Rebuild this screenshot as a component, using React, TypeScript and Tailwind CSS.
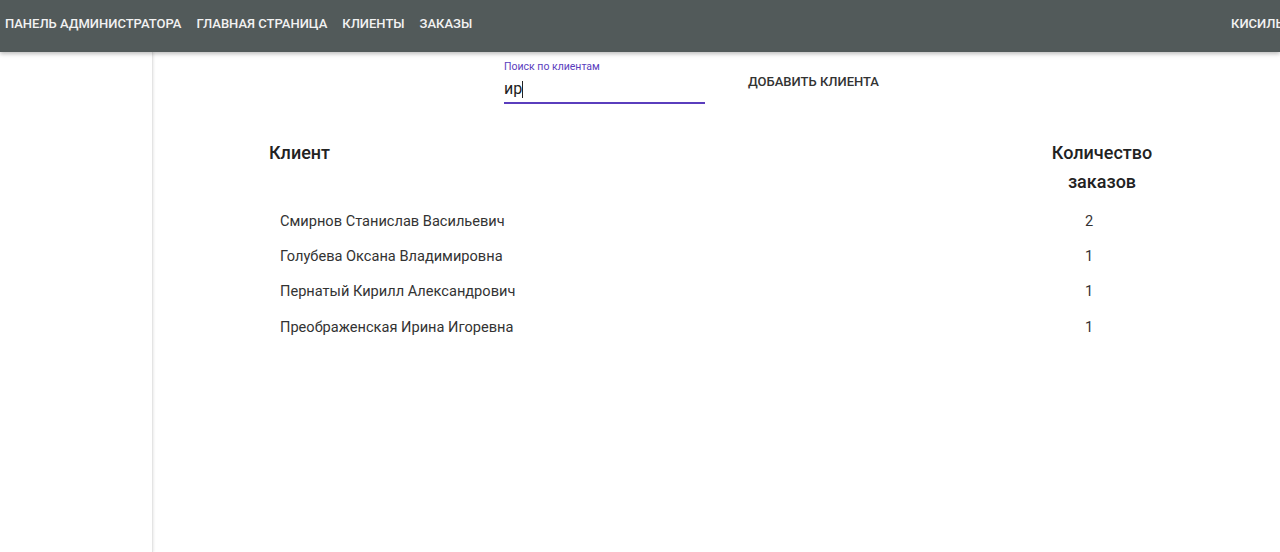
import React from "react";

const rows = [
  ["Смирнов Станислав Васильевич", "2"],
  ["Голубева Оксана Владимировна", "1"],
  ["Пернатый Кирилл Александрович", "1"],
  ["Преображенская Ирина Игоревна", "1"],
];

export default function App() {
  return (
    <div className="w-[1280px] h-[552px] overflow-hidden bg-white flex flex-col" style={{ fontFamily: "Roboto, 'Noto Sans', sans-serif" }}>
      <header className="relative z-10 h-[52px] shrink-0 bg-[#525a5a] shadow-[0_2px_4px_rgba(0,0,0,0.25)] flex items-center pb-[4px] text-[#f2f2f2] text-[13px] font-medium uppercase whitespace-nowrap">
        <div className="flex items-center gap-[15px] pl-[5px]">
          <span>Панель администратора</span>
          <span>Главная страница</span>
          <span>Клиенты</span>
          <span>Заказы</span>
        </div>
        <div className="ml-auto pl-[16px] w-[65px] overflow-hidden"><span>Кисильников</span></div>
      </header>
      <div className="flex flex-1">
        <aside className="w-[153px] shrink-0 border-r border-[#e4e4e4] shadow-[1px_0_2px_rgba(0,0,0,0.08)]" />
        <main className="flex-1">
          <div className="flex items-start mt-[8px] ml-[351px]">
            <div className="w-[201px] flex flex-col">
              <label className="text-[10.5px] leading-[12px] text-[#5a3dbd] mt-[1px]">Поиск по клиентам</label>
              <div className="mt-[6px] text-[16px] leading-[20px] text-[#222] flex items-center">
                ир<span className="inline-block w-px h-[17px] bg-[#222]" />
              </div>
              <div className="mt-[3px] h-[2px] bg-[#5a3dbd]" />
            </div>
            <button className="ml-[35px] mt-[14px] px-[8px] text-[13px] leading-[16px] font-medium uppercase text-[#333]">Добавить клиента</button>
          </div>
          <div className="ml-[116px] mt-[34px] w-[900px]">
            <div className="flex text-[18px] font-medium text-[#222] leading-[29px]">
              <div className="flex-1">Клиент</div>
              <div className="w-[124px] text-center mr-[5px]">Количество<br />заказов</div>
            </div>
            <div className="mt-[8px] text-[14.6px] text-[#333]">
              {rows.map(([name, n]) => (
                <div key={name} className="flex h-[35.3px] items-center">
                  <div className="flex-1 pl-[11px]">{name}</div>
                  <div className="w-[96px] text-center mr-[32px]">{n}</div>
                </div>
              ))}
            </div>
          </div>
        </main>
      </div>
    </div>
  );
}
